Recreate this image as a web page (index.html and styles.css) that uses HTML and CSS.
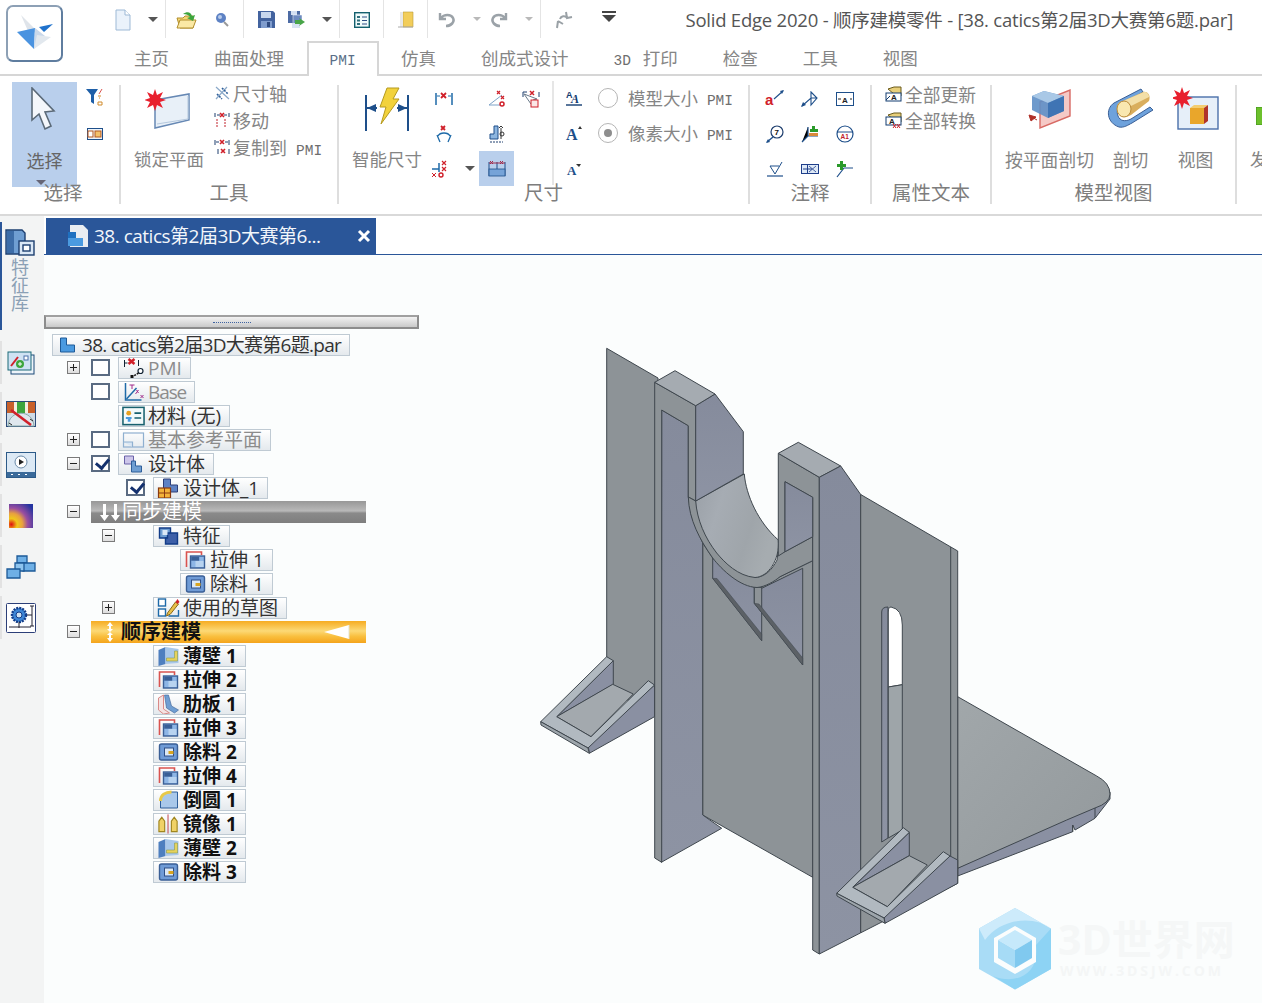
FILE: index.html
```html
<!DOCTYPE html>
<html lang="zh">
<head>
<meta charset="utf-8">
<title>Solid Edge 2020</title>
<link rel="stylesheet" href="styles.css">
</head>
<body>
<svg class="defs" aria-hidden="true">
  <symbol id="extrude" viewBox="0 0 22 20"><path d="M2 17V2h15v3" fill="none" stroke="#d9534f" stroke-width="1.600"/><rect x="6" y="6" width="14" height="12" fill="#8eb6e6" stroke="#3a5f96" stroke-width="1.400"/><rect x="6.700" y="6.700" width="8" height="4" fill="#3a5f96"/><rect x="11" y="11" width="8" height="6" fill="#b8d3f0"/></symbol>
  <symbol id="cut" viewBox="0 0 22 20"><rect x="2" y="2" width="18" height="16" rx="2" fill="#6f9bd6" stroke="#3a5f96" stroke-width="1.400"/><rect x="7" y="6" width="9" height="8" fill="#dbe8f6" stroke="#2f4f86"/><rect x="11" y="9" width="5" height="3" fill="#d9a521"/></symbol>
  <symbol id="thin" viewBox="0 0 22 20"><path d="M1 4l7-3v17l-7 2z" fill="#4e7fbf"/><path d="M8 1l13 2v14L8 18z" fill="#a9c8ea"/><path d="M9 12h8V5h3v10H9z" fill="#e6d25c" stroke="#8a9b52" stroke-width=".6"/></symbol>
  <symbol id="drop" viewBox="0 0 10 6"><path d="M0 0h10L5 5z"/></symbol>
</svg>

<div class="app">
  <header class="head">
    <div class="logo-cell">
      <div class="logo">
        <svg width="52" height="52" viewBox="2 3 52 52">
          <path d="M14 10l18 18-11-2z" fill="#dfe4ea"/>
          <path d="M10 27l17 17 1-21z" fill="#4a93e0"/>
          <path d="M28 23l-1 21 11-13z" fill="#c9d8ea"/>
          <path d="M32 22l14-3-9 8z" fill="#1f72cc"/>
          <path d="M30 30l14 2-17 12z" fill="#e2e8ee"/>
        </svg>
      </div>
    </div>
    <div class="head-main">
      <div class="qat">
        <span class="q ml47"><svg width="18" height="22" viewBox="0 0 18 22"><path d="M2 1h9l5 5v15H2z" fill="#eaf2fb" stroke="#9db9d6"/><path d="M11 1v5h5" fill="#fff" stroke="#9db9d6"/></svg></span>
        <span class="q dropq ml10"><svg class="dr" width="10" height="6"><use href="#drop"/></svg></span>
        <span class="qsep ml2"></span>
        <span class="q ml11"><svg width="22" height="20" viewBox="0 0 22 20"><path d="M1 8h6l2-2h8v12H4z" fill="#f4d774" stroke="#b28e2c"/><path d="M1 18l3-8h16l-3 8z" fill="#fbe9a5" stroke="#b28e2c"/><path d="M7 4c4-3 8-2 9 2l3-1-2 6-6-3 3-1c-1-2-4-3-7-3z" fill="#3da53d"/></svg></span>
        <span class="q ml15"><svg width="14" height="16" viewBox="0 0 14 16"><circle cx="6" cy="6" r="5" fill="#5e82c4"/><circle cx="5" cy="5" r="2" fill="#b8cbea"/><path d="M9 10l4 4" stroke="#999" stroke-width="2"/></svg></span>
        <span class="qsep ml11"></span>
        <span class="q ml12"><svg width="17" height="17" viewBox="0 0 17 17"><path d="M0 0h15l2 2v15H0z" fill="#43639f"/><rect x="3" y="1" width="10" height="6" fill="#c8d7ee"/><rect x="3" y="10" width="11" height="7" fill="#7f9ccd"/><rect x="9" y="11" width="3" height="5" fill="#2f4a80"/></svg></span>
        <span class="q ml11"><svg width="18" height="18" viewBox="0 0 18 18"><path d="M0 0h12v12H0z" fill="#4d6ba4"/><rect x="3" y="0" width="6" height="4" fill="#d5e0f2"/><path d="M5 4h9v9H5z" fill="#6d8ac0" stroke="#fff" stroke-width=".5"/><path d="M4 12h8v5H4z" fill="#d7e3f3"/><path d="M7 9h5l-1-2 6 4-6 4 1-2H7z" fill="#48a548"/></svg></span>
        <span class="q dropq ml10"><svg class="dr" width="10" height="6"><use href="#drop"/></svg></span>
        <span class="qsep ml2"></span>
        <span class="q ml12"><svg width="16" height="16" viewBox="0 0 16 16"><rect x=".7" y=".7" width="14.600" height="14.600" fill="#f1fbfb" stroke="#13606e" stroke-width="1.400"/><path d="M3 4h3v2H3zM3 7.500h3v2H3zM3 11h3v2H3z" fill="#2f6f7c"/><path d="M8 5h5M8 8.500h5M8 12h5" stroke="#2f4f86" stroke-width="1.200"/></svg></span>
        <span class="qsep ml11"></span>
        <span class="q ml12"><svg width="16" height="18" viewBox="0 0 16 18"><path d="M5 1h10v15H5z" fill="#f2cd5a" stroke="#b99a3a" stroke-width=".6"/><path d="M5 1H2v15h3z" fill="#e8e8e8"/><path d="M0 16h15" stroke="#aaa"/></svg></span>
        <span class="qsep ml11"></span>
        <span class="q ml9"><svg width="18" height="16" viewBox="0 0 18 16"><path d="M2 1v6h6" fill="none" stroke="#9ba2a8" stroke-width="2.400"/><path d="M3 6c3-4 10-4 12 0s-2 8-7 8" fill="none" stroke="#9ba2a8" stroke-width="2.600"/></svg></span>
        <span class="q dropq ml10"><svg class="dr pale" width="8" height="5"><use href="#drop"/></svg></span>
        <span class="q ml2"><svg width="18" height="16" viewBox="0 0 18 16"><path d="M16 1v6h-6" fill="none" stroke="#9ba2a8" stroke-width="2.400"/><path d="M15 6C12 2 5 2 3 6s2 8 7 8" fill="none" stroke="#9ba2a8" stroke-width="2.600"/></svg></span>
        <span class="q dropq ml10"><svg class="dr pale" width="8" height="5"><use href="#drop"/></svg></span>
        <span class="qsep ml1"></span>
        <span class="q ml13"><svg width="18" height="18" viewBox="0 0 18 18"><path d="M11 1l1 6 5-1M12 7c-2-3-6-2-7 1" fill="none" stroke="#9aa1a6" stroke-width="2"/><path d="M2 17l1-7M3 10l5 3" fill="none" stroke="#9aa1a6" stroke-width="2"/></svg></span>
        <span class="q ml25 custom"><svg width="14" height="12" viewBox="0 0 14 12"><path d="M0 0h14v2H0z" fill="#444"/><path d="M0 4h14l-7 7z" fill="#444"/></svg></span>
        <span class="title">Solid Edge 2020 - 顺序建模零件 - [38. catics第2届3D大赛第6题.par]</span>
      </div>
      <nav class="tabs">
        <span class="rtab">主页</span>
        <span class="rtab">曲面处理</span>
        <span class="rtab active"><span class="lat">PMI</span></span>
        <span class="rtab">仿真</span>
        <span class="rtab">创成式设计</span>
        <span class="rtab"><span class="lat lat3d">3D </span>打印</span>
        <span class="rtab">检查</span>
        <span class="rtab">工具</span>
        <span class="rtab">视图</span>
      </nav>
    </div>
  </header>

  <section class="ribbon">
    <div class="grp g-select">
      <div class="gbody">
        <div class="bigsel">
          <svg class="bigicon" width="30" height="44" viewBox="0 0 30 44"><path d="M5 1v32l7-6 6 15 6-3-6-14 9-1z" fill="#f4f7fb" stroke="#5b6a78" stroke-width="1.600"/></svg>
          <span class="bigtxt">选择</span>
          <svg class="selcaret" width="10" height="6"><use href="#drop"/></svg>
        </div>
        <div class="colsmall">
          <svg width="18" height="18" viewBox="0 0 18 18"><path d="M0 1h12L8 7v9L5 14V7z" fill="#1e5fa8"/><path d="M16 1l-3 5" stroke="#d9534f"/><path d="M12 8h3M13 10h1M12 14h4v3h-4z" stroke="#d08a2a" fill="none"/></svg>
          <svg width="16" height="12" viewBox="0 0 16 12"><rect x=".5" y=".5" width="15" height="11" fill="#eef4fa" stroke="#1e4f8a"/><rect x="8" y="3" width="6" height="6" fill="#f3c16b" stroke="#b5561d"/><rect x="1" y="3" width="5" height="6" fill="#fff" stroke="#b5561d"/></svg>
        </div>
      </div>
      <div class="glabel lab-select">选择</div>
    </div>
    <i class="gsep"></i>
    <div class="grp g-tools">
      <div class="gbody">
        <div class="big w70 ml13">
          <svg class="bigicon" width="48" height="42" viewBox="0 0 48 42"><path d="M10 12l34-6v26L10 40z" fill="#e8f0f8" stroke="#6688b4" stroke-width="1.500"/><path d="M12 36l31-5V8" fill="none" stroke="#b5c8dd"/><path d="M10 1l2 6 6-3-3 6 6 2-6 2 3 6-6-3-2 6-2-6-6 3 3-6-6-2 6-2-3-6 6 3z" fill="#e8202e"/></svg>
          <span class="bigtxt">锁定平面</span>
        </div>
        <div class="smalllist ml10">
          <div class="sl"><svg width="16" height="16" viewBox="0 0 16 16"><path d="M2 2l13 12M13 2L2 14" stroke="#8ba9c9" stroke-width="1.200"/><path d="M8 3l6 6M3 9l5 5" stroke="#2f5f9a" stroke-width="1.600" stroke-dasharray="2 1"/></svg><span>尺寸轴</span></div>
          <div class="sl"><svg width="16" height="16" viewBox="0 0 16 16"><path d="M1 1v4M15 1v4M3 3h3M10 3h3" stroke="#1e3e6e"/><path d="M6 1l4 4M10 1L6 5" stroke="#d0202a" stroke-width="1.600"/><path d="M3 7v8M11 7v8" stroke="#c0202a" stroke-dasharray="2 1"/></svg><span>移动</span></div>
          <div class="sl"><svg width="16" height="16" viewBox="0 0 16 16"><path d="M1 1v5M15 1v5M2 3h3M11 3h3M4 10v5M15 10v5" stroke="#1e3e6e"/><path d="M6 1l4 4M10 1L6 5M7 10l4 4M11 10l-4 4" stroke="#d0202a" stroke-width="1.600"/></svg><span>复制到 <span class="lat">PMI</span></span></div>
        </div>
      </div>
      <div class="glabel">工具</div>
    </div>
    <i class="gsep"></i>
    <div class="grp g-dim">
      <div class="gbody">
        <div class="big w70 ml13">
          <svg class="bigicon" width="48" height="44" viewBox="0 0 48 44"><path d="M3 8v38M45 8v38" stroke="#1e4f8a" stroke-width="2"/><path d="M4 21l9-4v8zM44 21l-9-4v8z" fill="#1e4f8a"/><path d="M4 21h10M34 21h10" stroke="#1e4f8a" stroke-width="2"/><path d="M24 1h12l-6 11h6L18 37l5-17h-6z" fill="#f2d23c" stroke="#b59a1f"/></svg>
          <span class="bigtxt">智能尺寸</span>
        </div>
        <div class="icogrid ml5">
          <span><svg width="18" height="16" viewBox="0 0 18 16"><path d="M1 2v12M17 2v12" stroke="#1e6aa8" stroke-width="1.500"/><path d="M2 5h3M13 5h3" stroke="#1e6aa8"/><path d="M6 2l5 5M11 2L6 7" stroke="#d0202a" stroke-width="1.800"/></svg></span>
          <span></span>
          <span><svg width="18" height="18" viewBox="0 0 18 18"><path d="M1 15L14 5M1 15h11" stroke="#7fa4c9"/><path d="M9 1l3 3M12 1L9 4M13 6l3 3M16 6l-3 3" stroke="#d0202a" stroke-width="1.200"/><circle cx="14" cy="14" r="2" fill="none" stroke="#d0202a" stroke-width="1.500"/></svg></span>
          <span><svg width="18" height="18" viewBox="0 0 18 18"><path d="M1 2h4M1 2v5M17 2v5" stroke="#1e3e6e"/><path d="M8 1l4 4M12 1L8 5" stroke="#d0202a" stroke-width="1.500"/><path d="M2 4l7 10 2-4 4-1z" fill="#fff" stroke="#6a7a8a"/><rect x="9" y="10" width="7" height="7" fill="#fbe7e7" stroke="#d0202a"/></svg></span>
          <span><svg width="18" height="18" viewBox="0 0 18 18"><path d="M6 1l4 4M10 1L6 5" stroke="#d0202a" stroke-width="1.800"/><path d="M3 11c2-4 10-4 12 0" fill="none" stroke="#1e6aa8" stroke-width="1.300"/><path d="M2 10l3 7M16 10l-3 7" stroke="#1e6aa8" stroke-width="1.300"/></svg></span>
          <span></span>
          <span><svg width="16" height="18" viewBox="0 0 16 18"><path d="M1 9h4V1h4v13H1z" fill="#8db6e0" stroke="#1e4f8a"/><path d="M12 3v11" stroke="#333"/><path d="M10 3l2-2 2 2" fill="none" stroke="#333"/><circle cx="13" cy="9" r="2" fill="none" stroke="#333"/><path d="M1 17h13" stroke="#1e3e6e" stroke-dasharray="2 1"/></svg></span>
          <span></span>
          <span class="shl"><svg width="18" height="18" viewBox="0 0 18 18"><path d="M1 9h7M8 3v9" stroke="#1e6aa8" stroke-width="1.500"/><path d="M11 1l4 4M15 1l-4 4M11 7l4 4M15 7l-4 4" stroke="#d0202a" stroke-width="1.200"/><path d="M1 13l4 4M5 13l-4 4" stroke="#d0202a"/><circle cx="10" cy="15" r="2" fill="none" stroke="#d0202a" stroke-width="1.400"/></svg></span>
          <span><svg class="dr" width="10" height="6"><use href="#drop"/></svg></span>
          <span class="sel"><svg width="18" height="18" viewBox="0 0 18 18"><path d="M1 2v14M9 2v14M17 2v14" stroke="#1e4f8a"/><rect x="1" y="9" width="16" height="7" fill="#76a3d8" stroke="#1e4f8a" stroke-width=".8"/><path d="M2 1l3 3M5 1L2 4M12 1l3 3M15 1l-3 3" stroke="#a02a4a"/><path d="M1 3h16" stroke="#a02a4a"/></svg></span>
          <span></span>
        </div>
        <i class="innersep"></i>
        <div class="icocol">
          <span><svg width="18" height="18" viewBox="0 0 18 18"><text class="ta" x="1" y="8">A</text><text class="tb" x="6" y="13">A</text><path d="M1 15h16" stroke="#123c70" stroke-width="1.400"/></svg></span>
          <span><svg width="20" height="20" viewBox="0 0 20 20"><text class="tc" x="2" y="16">A</text><path d="M14 5l2-3 2 3z" fill="#333"/></svg></span>
          <span><svg width="18" height="18" viewBox="0 0 18 18"><text class="td" x="2" y="15">A</text><path d="M11 4h5l-2 3z" fill="#333"/></svg></span>
        </div>
        <div class="radios">
          <div class="radio"><i class="rd"></i><span>模型大小 <span class="lat">PMI</span></span></div>
          <div class="radio"><i class="rd on"></i><span>像素大小 <span class="lat">PMI</span></span></div>
        </div>
      </div>
      <div class="glabel">尺寸</div>
    </div>
    <i class="gsep"></i>
    <div class="grp g-note">
      <div class="gbody">
        <div class="icogrid3 ml7">
          <span><svg width="20" height="20" viewBox="0 0 20 20"><text class="tr" x="0" y="16">a</text><path d="M9 10l9-8" stroke="#1e4f8a" stroke-width="1.200"/><path d="M19 1l-4 1 2 3z" fill="#1e4f8a"/></svg></span>
          <span><svg width="18" height="16" viewBox="0 0 18 16"><path d="M1 15L10 7h6M10 1l6 6-6 7z" fill="none" stroke="#1e4f8a" stroke-width="1.100"/><path d="M0 16l5-2-3-3z" fill="#1e4f8a"/></svg></span>
          <span><svg width="18" height="14" viewBox="0 0 18 14"><rect x=".5" y=".5" width="17" height="13" fill="#fff" stroke="#1e4f8a"/><text class="tk" x="6" y="10.500">A</text><path d="M2 7h3M14 7h2" stroke="#222"/></svg></span>
          <span><svg width="18" height="18" viewBox="0 0 18 18"><circle cx="11" cy="7" r="6" fill="#fff" stroke="#1e3e6e" stroke-width="1.200"/><text class="tn" x="8.500" y="10">7</text><path d="M7 12l-6 5" stroke="#1e4f8a" stroke-width="1.400"/><path d="M0 18l4-1-2-3z" fill="#1e4f8a"/></svg></span>
          <span><svg width="18" height="18" viewBox="0 0 18 18"><path d="M1 17l6-6V2M7 11h10" stroke="#1e4f8a" stroke-width="1.200"/><path d="M11 1h3v3h3v3H9V4h2z" fill="#2a9a2a"/><path d="M8 8h9v3H8z" fill="#d98a3a"/></svg></span>
          <span><svg width="18" height="18" viewBox="0 0 18 18"><circle cx="9" cy="9" r="8" fill="#fff" stroke="#1e4f8a" stroke-width="1.200"/><path d="M1 7h16" stroke="#1e4f8a"/><text class="tm" x="4.500" y="14">A1</text></svg></span>
          <span><svg width="16" height="16" viewBox="0 0 16 16"><path d="M0 15h16" stroke="#1e4f8a" stroke-width="1.200"/><path d="M3 5l5 8 7-12" fill="none" stroke="#1e4f8a"/><path d="M3 5h9" stroke="#1e4f8a"/></svg></span>
          <span><svg width="18" height="10" viewBox="0 0 18 10"><rect x=".5" y=".5" width="17" height="9" fill="#dfeaf7" stroke="#1e3e8a"/><path d="M6.500 1v8M2 5h9" stroke="#1e3e8a"/><path d="M8 2l7 6M15 2L8 8" stroke="#1e3e8a" stroke-width=".8"/></svg></span>
          <span><svg width="18" height="18" viewBox="0 0 18 18"><path d="M1 17l7-9h9" fill="none" stroke="#1e4f8a" stroke-width="1.200"/><path d="M4 1h3v3h3v3H7v3H4V7H1V4h3z" fill="#2a9a2a"/></svg></span>
        </div>
      </div>
      <div class="glabel">注释</div>
    </div>
    <i class="gsep"></i>
    <div class="grp g-attr">
      <div class="gbody">
        <div class="attrlist">
          <div class="sl"><svg width="17" height="16" viewBox="0 0 17 16"><path d="M3 3l6-2h7v9L9 8z" fill="#e8cf7a" stroke="#6a5a1a"/><rect x="1" y="7" width="15" height="8" fill="#fff" stroke="#123c70"/><text class="tk" x="6" y="14">A</text><path d="M1 14l4-4" stroke="#123c70"/></svg><span>全部更新</span></div>
          <div class="sl"><svg width="17" height="17" viewBox="0 0 17 17"><path d="M3 3l6-2h7v9L9 8z" fill="#e8cf7a" stroke="#6a5a1a"/><rect x="1" y="5" width="15" height="8" fill="#fff" stroke="#123c70"/><text class="tk" x="4" y="12">A</text><path d="M8 12l3 4M11 12l-3 4M12 12l3 4M15 12l-3 4" stroke="#d0202a"/></svg><span>全部转换</span></div>
        </div>
      </div>
      <div class="glabel">属性文本</div>
    </div>
    <i class="gsep"></i>
    <div class="grp g-model">
      <div class="gbody">
        <div class="big w89 ml13">
          <svg class="bigicon" width="48" height="42" viewBox="0 0 48 42"><path d="M14 14L44 2v26L14 40z" fill="#f5c9c6" stroke="#d86a64" stroke-width="1.400"/><path d="M6 8l12-5 20 5v15l-16 7-16-8z" fill="#5e8fc6" opacity=".9"/><path d="M6 8l12-5 20 5-16 7z" fill="#a9c8e6"/><path d="M22 15l16-7v15l-16 7z" fill="#3f74b4"/><path d="M4 28l7 4M3 27l2 6 5-4z" stroke="#b03028" fill="#b03028"/></svg>
          <span class="bigtxt">按平面剖切</span>
        </div>
        <div class="big w35 ml19">
          <svg class="bigicon wide" width="48" height="42" viewBox="0 0 48 42"><path d="M34 1L7 15c-9 6-7 20 5 24 5 1 9-2 13-4l21-13-3-3-19 12c-6 3-11 2-13-3s0-9 6-12L36 4z" fill="#6ea2dc" stroke="#3a5f96"/><path d="M36 4c5-1 8 4 6 9L24 27c-7 4-13 1-14-5s2-8 6-9z" fill="#d9ae5e"/><path d="M16 13l21-9c3 0 5 2 5 5L20 20z" fill="#f3dfa8"/><ellipse cx="17" cy="21" rx="7" ry="8" fill="#f9e8b0" stroke="#b98a3a"/></svg>
          <span class="bigtxt">剖切</span>
        </div>
        <div class="big w35 ml30">
          <svg class="bigicon wide" width="46" height="44" viewBox="0 0 46 44"><rect x="5" y="10" width="40" height="32" fill="#e6eff9" stroke="#4a70aa" stroke-width="1.400"/><path d="M17 21h14v16H17z" fill="#e9a62b"/><path d="M17 21l4-3h14l-4 3z" fill="#f3cd71"/><path d="M31 21l4-3v16l-4 3z" fill="#b0332a"/><path d="M9 0l2 6 6-3-3 6 6 2-6 2 3 6-6-3-2 6-2-6-6 3 3-6-6-2 6-2-3-6 6 3z" fill="#e8202e"/></svg>
          <span class="bigtxt">视图</span>
        </div>
      </div>
      <div class="glabel">模型视图</div>
    </div>
    <i class="gsep"></i>
    <div class="grp g-last">
      <div class="gbody">
        <div class="big w35 ml13">
          <svg class="bigicon lasticon" width="24" height="18" viewBox="0 0 24 18"><rect x="0" y="0" width="24" height="18" fill="#6cc02c" stroke="#3f8f1a"/></svg>
          <span class="bigtxt">发布</span>
        </div>
      </div>
    </div>
  </section>

  <div class="main">
    <aside class="strip">
      <div class="vtab">
        <svg width="30" height="28" viewBox="0 0 30 28"><path d="M1 2h16l3 3v21H1z" fill="#6f9ed2" stroke="#1d3f70" stroke-width="1.400"/><rect x="2" y="3" width="7" height="22" fill="#3d6da8"/><rect x="14" y="13" width="15" height="14" fill="#dbe8f6" stroke="#1d3f70" stroke-width="1.400"/><rect x="18" y="17" width="7" height="6" fill="#fff" stroke="#1d3f70" stroke-width="1.400"/></svg>
        <span class="vtxt">特征库</span>
      </div>
      <div class="sitem"><svg width="28" height="24" viewBox="0 0 28 24"><rect x="4" y="4" width="23" height="19" fill="#eef4fa" stroke="#1d4a78"/><rect x="1" y="1" width="23" height="18" fill="#cfe2f3" stroke="#1d6a78"/><path d="M4 15L11 6" stroke="#d0202a" stroke-width="2"/><circle cx="13" cy="13" r="4" fill="#3da53d"/><path d="M11 13h4M13 11v4" stroke="#fff"/><rect x="17" y="5" width="4" height="4" fill="#fff" stroke="#4a70aa"/></svg></div>
      <div class="sitem"><svg width="30" height="26" viewBox="0 0 30 26"><rect x=".5" y=".5" width="29" height="25" fill="#cfdbe6" stroke="#2c4a78"/><rect x="1" y="1" width="7" height="11" fill="#c8602a"/><rect x="8" y="1" width="3" height="11" fill="#f4eee0"/><rect x="11" y="1" width="8" height="11" fill="#3da53d"/><rect x="19" y="1" width="3" height="11" fill="#f4eee0"/><rect x="22" y="1" width="7" height="11" fill="#c8602a"/><path d="M2 25c1-17 25-17 26 0z" fill="#dfe7ee" stroke="#8aa"/><path d="M5 9l20 15" stroke="#d0202a" stroke-width="2.600"/><path d="M3 22l3 2M24 18l3 2" stroke="#222"/></svg></div>
      <div class="sitem"><svg width="30" height="26" viewBox="0 0 30 26"><rect x=".5" y=".5" width="29" height="25" fill="#dce9f5" stroke="#2c5a88"/><circle cx="15" cy="10" r="6" fill="#fff" stroke="#6a8aa8"/><path d="M13 7l5 3-5 3z" fill="#222"/><rect x="1" y="20" width="28" height="5" fill="#3a6a9a"/><path d="M5 22.500h20" stroke="#fff" stroke-dasharray="2 5"/></svg></div>
      <div class="sitem"><svg width="24" height="24" viewBox="0 0 24 24"><defs><radialGradient id="heat" cx=".1" cy=".85" r="1.100"><stop offset="0" stop-color="#e01010"/><stop offset=".22" stop-color="#f0c81a"/><stop offset=".42" stop-color="#e8a040"/><stop offset=".62" stop-color="#9a4ea0"/><stop offset="1" stop-color="#2433a0"/></radialGradient></defs><rect width="24" height="24" fill="url(#heat)"/></svg></div>
      <div class="sitem"><svg width="30" height="24" viewBox="0 0 30 24"><path d="M11 1h10v7h-10z" fill="#6fb0e6" stroke="#1d5a98" stroke-width="1.300"/><path d="M17 8h12v8H17z" fill="#6fb0e6" stroke="#1d5a98" stroke-width="1.300"/><path d="M9 8h9v8H9z" fill="#8ec4ee" stroke="#1d5a98" stroke-width="1.300"/><path d="M1 14h13v9H1z" fill="#6fb0e6" stroke="#1d5a98" stroke-width="1.300"/></svg></div>
      <div class="sitem"><svg width="30" height="30" viewBox="0 0 30 30"><rect x=".5" y=".5" width="29" height="29" rx="1" fill="#fff" stroke="#2c3f78"/><circle cx="13" cy="12" r="7" fill="#3d86d6" stroke="#123c88" stroke-width="2.400" stroke-dasharray="2 1"/><circle cx="13" cy="12" r="3" fill="#cfe2f3" stroke="#123c88"/><path d="M24 3h4M26 3v20M24 23h4M21 12h5M3 24h22M13 19v6" stroke="#223"/></svg></div>
    </aside>

    <div class="work">
      <div class="doctabs">
        <div class="doctab">
          <svg width="22" height="24" viewBox="0 0 22 24"><path d="M3 1h13l5 5v17H3z" fill="#e9edf2"/><path d="M1 8h8v6h7v8H1z" fill="#4a9ae0"/><path d="M1 8h8v6H1z" fill="#1e70c0"/></svg>
          <span class="doctxt">38. catics第2届3D大赛第6...</span>
          <svg class="docx" width="14" height="14" viewBox="0 0 14 14" role="img" aria-label="关闭"><path d="M2 2l10 10M12 2L2 12" stroke="#fff" stroke-width="3"/></svg>
        </div>
      </div>
      <div class="stage">
        <div class="pane">
          <div class="splitter"><i></i></div>
          <div class="tree">
            <div class="root node">
              <svg class="ti" width="18" height="18" viewBox="0 0 18 18"><path d="M2 2h6v7h8v7H2z" fill="#4a9ae0" stroke="#1d5a98"/></svg><span>38. catics第2届3D大赛第6题.par</span>
            </div>
            <div class="row">
              <i class="exp c1"></i><i class="chk c2"></i>
              <div class="node c4 dim"><svg class="ti" width="22" height="20" viewBox="0 0 22 20"><path d="M2 2v7M2 5h3" stroke="#123"/><path d="M6 1l6 5M12 1L6 6" stroke="#d0202a" stroke-width="2.500"/><path d="M16 2v6" stroke="#123"/><circle cx="18" cy="13" r="2.500" fill="#fff" stroke="#123" stroke-width="1.200"/><path d="M16 15l-5 3" stroke="#111" stroke-dasharray="2 1" stroke-width="1.500"/><rect x="8" y="17" width="3" height="3" fill="#111"/></svg><span>PMI</span></div>
            </div>
            <div class="row">
              <i class="chk c2"></i>
              <div class="node c4 dim tight"><svg class="ti" width="22" height="20" viewBox="0 0 22 20"><path d="M3 1v17h16" fill="none" stroke="#1e6aa8" stroke-width="1.500"/><path d="M4 17L14 6" stroke="#1e6aa8" stroke-width="1.500"/><path d="M7 3h5M9.500 3v4" stroke="#a02a8a"/><path d="M14 8l2 3M16 8l-3 4" stroke="#a02a8a"/><path d="M18 13l3 3M21 13l-3 3" stroke="#a02a8a"/></svg><span>Base</span></div>
            </div>
            <div class="row">
              <div class="node c4"><svg class="ti" width="24" height="20" viewBox="0 0 24 20"><rect x="1" y="1" width="22" height="18" fill="#f2f9fa" stroke="#16606e" stroke-width="1.600"/><circle cx="7" cy="7" r="2.500" fill="#e8a020"/><path d="M4 11h6v2H4zM6 13h3v3H6z" fill="#4a9ae0"/><path d="M13 7h7M13 12h7" stroke="#16606e" stroke-width="1.600"/></svg><span>材料 (无)</span></div>
            </div>
            <div class="row">
              <i class="exp c1"></i><i class="chk c2"></i>
              <div class="node c4 dim"><svg class="ti" width="22" height="18" viewBox="0 0 22 18"><rect x="1" y="2" width="20" height="14" fill="none" stroke="#8fb0d0" stroke-width="1.200"/><path d="M1 11h9v5" fill="#d8e6f4" stroke="#8fb0d0" stroke-width="1.200"/></svg><span>基本参考平面</span></div>
            </div>
            <div class="row">
              <i class="exp minus c1"></i><i class="chk on c2"></i>
              <div class="node c4"><svg class="ti" width="20" height="18" viewBox="0 0 20 18"><path d="M1 1h9v8H1z" fill="#cdc6ea" stroke="#6a62a8"/><path d="M8 6h4v5h6v6H8z" fill="#6f9ed2" stroke="#2f5f9a"/></svg><span>设计体</span></div>
            </div>
            <div class="row">
              <i class="chk on c5"></i>
              <div class="node c6"><svg class="ti" width="22" height="20" viewBox="0 0 22 20"><path d="M6 1h7v6h7v7H6z" fill="#5e82c4" stroke="#2c3f78"/><rect x="1" y="10" width="12" height="10" fill="#f2b33a" stroke="#8a3a10" stroke-width="1.200"/><path d="M7 10v10M1 15h12" stroke="#8a3a10"/></svg><span>设计体_1</span></div>
            </div>
            <div class="row">
              <i class="exp minus c1"></i>
              <div class="band gray"><svg width="20" height="18" viewBox="0 0 20 18"><path d="M3 1h3v11h3l-4.500 6L0 12h3zM14 1h3v11h3l-4.500 6L11 12h3z" fill="#fff"/></svg><span>同步建模</span></div>
            </div>
            <div class="row">
              <i class="exp minus c3"></i>
              <div class="node c6"><svg class="ti" width="20" height="18" viewBox="0 0 20 18"><path d="M1 1h11v10H1z" fill="#6f9ed2" stroke="#123c88" stroke-width="1.400"/><path d="M9 6h10v11H7v-6h2z" fill="#3d5fa8" stroke="#123c88" stroke-width="1.400"/><rect x="4" y="3" width="5" height="5" fill="#dbe8f6"/></svg><span>特征</span></div>
            </div>
            <div class="row">
              <div class="node c7"><svg class="ti" width="22" height="20"><use href="#extrude"/></svg><span>拉伸 1</span></div>
            </div>
            <div class="row">
              <div class="node c7"><svg class="ti" width="22" height="20"><use href="#cut"/></svg><span>除料 1</span></div>
            </div>
            <div class="row">
              <i class="exp c3"></i>
              <div class="node c6"><svg class="ti" width="22" height="20" viewBox="0 0 22 20"><rect x="1" y="1" width="7" height="7" fill="#fff" stroke="#1e6aa8" stroke-width="1.400"/><rect x="1" y="11" width="7" height="7" fill="#fff" stroke="#1e6aa8" stroke-width="1.400"/><path d="M11 18h10v-6" fill="none" stroke="#1e6aa8" stroke-width="1.400"/><path d="M10 15l8-11 3 2-8 10-4 2z" fill="#e8c04a" stroke="#8a6a1a"/><path d="M18 4l2-3 2 3-2 2z" fill="#d0202a"/></svg><span>使用的草图</span></div>
            </div>
            <div class="row">
              <i class="exp minus c1"></i>
              <div class="band orange"><svg width="20" height="20" viewBox="0 0 20 20"><path d="M10 0l3 4h-2v3h2l-3 3-3-3h2V4H7zM10 10l3 3h-2v3h2l-3 4-3-4h2v-3H7z" fill="#fff"/></svg><span>顺序建模</span><svg class="band-arrow" width="26" height="16" viewBox="0 0 26 16"><path d="M0 8l25-7v14z" fill="#fff"/><path d="M25 1v14" stroke="#e2e2d0"/></svg></div>
            </div>
            <div class="row"><div class="node c6 b"><svg class="ti" width="22" height="20"><use href="#thin"/></svg><span>薄壁 1</span></div></div>
            <div class="row"><div class="node c6 b"><svg class="ti" width="22" height="20"><use href="#extrude"/></svg><span>拉伸 2</span></div></div>
            <div class="row"><div class="node c6 b"><svg class="ti" width="22" height="20" viewBox="0 0 22 20"><path d="M1 4l5-3v14l6 4-6 1-5-4z" fill="#f4e3e3" stroke="#d98a88"/><path d="M7 1h4l3 11 7 4-4 3-8-5z" fill="#6f9ed2" stroke="#3a5f96" stroke-width=".6"/></svg><span>肋板 1</span></div></div>
            <div class="row"><div class="node c6 b"><svg class="ti" width="22" height="20"><use href="#extrude"/></svg><span>拉伸 3</span></div></div>
            <div class="row"><div class="node c6 b"><svg class="ti" width="22" height="20"><use href="#cut"/></svg><span>除料 2</span></div></div>
            <div class="row"><div class="node c6 b"><svg class="ti" width="22" height="20"><use href="#extrude"/></svg><span>拉伸 4</span></div></div>
            <div class="row"><div class="node c6 b"><svg class="ti" width="22" height="20" viewBox="0 0 22 20"><path d="M3 18V10C3 5 8 2 13 2h7v16z" fill="#a9c8ea" stroke="#2f5f9a"/><path d="M3 11C3 5 8 2 14 2" fill="none" stroke="#e8c94a" stroke-width="3"/></svg><span>倒圆 1</span></div></div>
            <div class="row"><div class="node c6 b"><svg class="ti" width="24" height="20" viewBox="0 0 24 20"><path d="M2 7l3-4 3 4v11H2zM15 7l3-4 3 4v11h-6z" fill="#f0d266" stroke="#a0861f" stroke-width="1.200"/><path d="M11.500 0v20" stroke="#c0404a"/></svg><span>镜像 1</span></div></div>
            <div class="row"><div class="node c6 b"><svg class="ti" width="22" height="20"><use href="#thin"/></svg><span>薄壁 2</span></div></div>
            <div class="row"><div class="node c6 b"><svg class="ti" width="22" height="20"><use href="#cut"/></svg><span>除料 3</span></div></div>
          </div>
        </div>

        <div class="canvas">
          <svg class="model" width="843" height="748" viewBox="419 255 843 748">
            <defs>
              <linearGradient id="cyl" x1="0" y1="0" x2="1" y2=".4"><stop offset="0" stop-color="#999fa6"/><stop offset=".35" stop-color="#a6acb3"/><stop offset=".75" stop-color="#9fa5aa"/><stop offset="1" stop-color="#a6acb0"/></linearGradient>
              <linearGradient id="plate" x1="0" y1="0" x2="1" y2="1"><stop offset="0" stop-color="#a1a7aa"/><stop offset="1" stop-color="#93999c"/></linearGradient>
              <linearGradient id="blue" x1="0" y1="0" x2="0" y2="1"><stop offset="0" stop-color="#858b9c"/><stop offset="1" stop-color="#8d93a3"/></linearGradient>
            </defs>
            <!-- back plate -->
            <path class="grey" d="M606.700 348.300L658 378V700H606.700Z"/>
            <!-- left foot -->
            <path class="wall" d="M613.300 660.700V684.300L556.700 716.700Z"/>
            <path class="floor" d="M556.700 716.700L612.700 684.300L633.300 694L591 736.700Z"/>
            <path class="wall" d="M654.500 685V716.700L589.300 753.300L588 745Z"/>
            <path class="rim" d="M540.700 721.700L606.700 656.700L613.300 660.700L556.700 716.700L591 736.700L648.300 680.700L654.500 685L588 748Z"/>
            <path class="lip" d="M540.700 721.700L588 748L589.300 753.300L541 725Z"/>
            <!-- base plate -->
            <path class="under" d="M957.700 868V876L1072.700 831.700V825L1075 830L1095 818.300L1110 799V792Z"/>
            <path class="plate" d="M957.700 696.700L1096.700 776Q1110 783 1110 794Q1110 803 1095 808L1066.700 820L957.700 868.300Z"/>
            <path class="line" d="M1095 808V818M1072.700 825V832"/>
            <!-- central face -->
            <path class="grey" d="M702.700 543L712.700 558L730 575L754 587.300H760.700L780 576.700L812.700 560.700V877.300L702.700 815Z"/>
            <!-- notches -->
            <path class="blue" d="M712.700 558V578.300L761.700 640.700V587.300H754L730 575Z"/>
            <path class="blue" d="M761.700 588.300L802.700 568.300V665L754.300 603.300V587.300Z"/>
            <path class="grey" d="M754.300 587.300V603.300L761.700 612V587.300Z"/>
            <path class="dark" d="M712.700 578.300L717 578.500L761.700 634V640.700Z"/>
            <path class="dark" d="M754.300 603.300L759 604L802.700 658V665Z"/>
            <!-- left column panel -->
            <path class="blue" d="M661.700 410L688.300 425.700V497L691.700 516.700L702.700 543V815L721.700 828.300L661.300 862.300Z"/>
            <path class="grey" d="M654.700 382.300L695.700 405.700V501L688.300 497V425.700L661.700 410V862.300L654.700 858Z"/>
            <!-- cylinder cut and rim -->
            <path class="grey" d="M688.300 497C689 520 700 540 712.700 558C722 570 740 587 757 587.500C765 587 775 581 780 576.700L812.700 560.700V536.700L785 551.700L778 552L777 560C772 570 765 577 755 577.500L695.700 501Z"/>
            <path class="cyl" d="M695.700 501L744.300 474C746 495 758 522 778.300 540C780 560 768 577 755 577.500C738 576 725 563 716.700 553C705 538 697 520 695.700 501Z"/>
            <path class="blue" d="M695.700 405.700L715 394L743.300 431.700V474L695.700 501Z"/>
            <path class="top" d="M654.700 382.300L675 370.700L715 394L695.700 405.700Z"/>
            <!-- right column -->
            <path class="grey" d="M778.300 453.300L819.300 477.300V954L812.700 950V497.300L785 481.700V551.700L778.300 556Z"/>
            <path class="blue" d="M785 481.700L812.700 497.300V536.700L785 551.700Z"/>
            <path class="top" d="M778.300 453.300L798.300 442.300L840.700 466L819.300 477.300Z"/>
            <!-- right plate -->
            <path class="blue" d="M819.300 477.300L840.700 466L860.700 494.500V932.800L819.300 954Z"/>
            <path class="grey" d="M860.700 494.500L957.700 551V883.300L860.700 932.800Z"/>
            <path class="line" d="M950.700 547V857"/>
            <path class="blue" d="M881.700 612Q881.700 607 888 607V838L881.700 842Z"/>
            <path class="win" d="M888.300 687V612Q888.300 607 891 607Q902.300 609 902.300 625V684.700Z"/>
            <path class="slot" d="M888.300 687L902.300 684.700V830L888.300 838Z"/>
            <!-- right foot -->
            <path class="wall" d="M909.300 832.300V855.700L852.700 887.300Z"/>
            <path class="floor" d="M852.700 887.300L909.300 855.700L927.300 865L887.300 906.700Z"/>
            <path class="wall" d="M950 856L957.700 860V883.300L885 923.300L884 916Z"/>
            <path class="rim" d="M836.700 893.300L903.300 827.700L909.300 832.300L852.700 887.300L887.300 906.700L943.300 851.700L950 856L884 918Z"/>
            <path class="lip" d="M836.700 893.300L884 918L885 923.300L837 896Z"/>
            <!-- watermark -->
            <g class="wm">
              <path d="M1015 908L1051 928.500V969L1015 989.500L979 969V928.500Z" fill="#a9dcf6"/>
              <path d="M1015 908L1051 928.500C1035 915 1000 918 985 940L979 928.500Z" fill="#cdebfb"/>
              <path d="M1051 928.500V969L1015 989.500L993 976C1015 985 1040 975 1036 945Z" fill="#8dd3f4"/>
              <path d="M1015 926L1036 938V962L1015 974L994 962V938Z" fill="#fbfdfd"/>
              <path d="M1015 930L1032 940L1015 950L998 940Z" fill="#c6e9fb"/>
              <path d="M998 940L1015 950V968L998 958Z" fill="#a6dbf6"/>
              <path d="M1032 940L1015 950V968L1032 958Z" fill="#80c9ef"/>
              <text class="wm1" x="1058" y="955">3D世界网</text>
              <text class="wm2" x="1060" y="976">WWW.3DSJW.COM</text>
            </g>
          </svg>
        </div>
      </div>
    </div>
  </div>
</div>
</body>
</html>
```

FILE: styles.css
```css
*{box-sizing:border-box}
html,body{margin:0;padding:0}
body{width:1262px;height:1003px;overflow:hidden;background:#fff;font-family:"Noto Sans CJK SC","Noto Sans",sans-serif;color:#777}
.defs{position:absolute;width:0;height:0}
svg{display:block;flex:none}
i{display:block;font-style:normal}
.app{display:flex;flex-direction:column;height:1003px}

/* head */
.head{display:flex;height:76px;border-bottom:2px solid #d6d6d6}
.logo-cell{width:66px;padding:5px 0 0 6px;flex:none}
.logo{width:57px;height:57px;border:2px solid #5f7d9f;border-radius:7px;background:#fff;display:flex;align-items:center;justify-content:center;border-top-color:#8da0b5;border-left-color:#8da0b5}
.head-main{flex:1;display:flex;flex-direction:column;min-width:0}
.qat{display:flex;height:41px;align-items:center;padding-bottom:2px}
.q{width:20px;height:22px;display:flex;align-items:center;justify-content:center;flex:none}
.custom{margin-top:-5px}
.dr{fill:#555}
.dr.pale{fill:#b9b9b9}
.qsep{width:1px;height:39px;background:#e4e4e4;flex:none;margin-top:-3px}
.ml1{margin-left:1px}.ml2{margin-left:2px}.ml9{margin-left:9px}.ml10{margin-left:10px}.ml11{margin-left:11px}
.ml12{margin-left:12px}.ml13{margin-left:13px}.ml15{margin-left:15px}.ml25{margin-left:25px}.ml47{margin-left:47px}
.ml5{margin-left:5px}.ml7{margin-left:7px}.ml19{margin-left:19px}.ml30{margin-left:30px}
.title{margin-left:auto;padding-right:29px;font:18.500px/24px "Open Sans","Noto Sans CJK SC",sans-serif;letter-spacing:-.22px;color:#555;white-space:nowrap}
.tabs{display:flex;height:33px;padding-left:45.500px;align-items:flex-end}
.rtab{height:33px;padding:0 22.500px;font-size:17.500px;line-height:34px;color:#858585;white-space:pre}
.rtab.active{padding:0 21px;border:2px solid #d6d6d6;border-bottom:0;background:#fff;height:35px;margin-bottom:-2px;position:relative;line-height:29px}
.rtab.active .lat{color:#5a6f88;margin-left:0}
.lat{font-family:"Liberation Mono",monospace;font-size:14.500px;color:#6e6e6e;margin-left:5px}
.lat3d{margin-left:0;margin-right:3px}

/* ribbon */
.ribbon{display:flex;height:140px;padding-top:6px;border-bottom:2px solid #d9d9d9;flex:none;overflow:hidden}
.grp{flex:none;display:flex;flex-direction:column}
.g-select{width:119px}.g-tools{width:216px}.g-dim{width:409px}.g-note{width:120px}.g-attr{width:118px}.g-model{width:243px}.g-last{flex:1;min-width:0;overflow:hidden}
.gsep{width:2px;height:119px;margin-top:3px;background:#dedede;flex:none}
.gbody{display:flex;height:105px;flex:none}
.glabel{height:20px;line-height:10px;text-align:center;font-size:19.500px;color:#7d7d7d;position:relative}
.lab-select{padding-left:7px}
.bigsel{position:relative;width:65px;height:105px;margin-left:12px;background:#b9cfec;display:flex;flex-direction:column;align-items:center;padding:5px 6px 0 0;flex:none}
.selcaret{position:absolute;left:24px;top:98px;fill:#667}
.big{display:flex;flex-direction:column;align-items:center;padding-top:5px;flex:none}
.bigicon{height:44px;flex:none}
.bigtxt{margin-top:16px;line-height:24px;font-size:17.500px;color:#858585;white-space:nowrap}
.bigsel .bigtxt{margin:17px -6px 0 0;font-size:18px;color:#666}
.w70{width:70px}.w89{width:89px}.w35{width:35px}
.big.w35 .wide{margin:0 -10px}
.lasticon{margin-top:20px;height:18px;margin-bottom:6px}
.g-last .big{align-items:flex-start}
.g-last .lasticon{margin-left:6px}
.colsmall{width:36px;padding-top:6px;display:flex;flex-direction:column;align-items:center;gap:22px;flex:none}
.smalllist,.attrlist{display:flex;flex-direction:column;flex:none}
.smalllist{margin-top:-3px}
.sl{display:flex;align-items:center;gap:3px;height:27px;font-size:18px;color:#858585;white-space:pre}
.icogrid{display:grid;grid-template-columns:34px 18px 35px 34px;grid-template-rows:35px 35px 35px;flex:none;margin-top:-1px}
.icogrid span,.icogrid3 span,.icocol span{display:flex;align-items:center;justify-content:center}
.icogrid .sel{background:#b9cfec}
.icogrid .shl{padding-right:8px}
.innersep{width:2px;height:104px;background:#e6e6e6;margin-left:4px;flex:none;margin-top:-1px}
.icocol{width:24px;margin-left:8px;display:grid;grid-template-rows:35px 35px 35px;flex:none;margin-top:-1px}
.radios{margin-left:12px;display:flex;flex-direction:column;flex:none;margin-top:-2px}
.radio{display:flex;align-items:center;gap:10px;height:35px;font-size:17.500px;color:#858585;white-space:pre}
.rd{width:20px;height:20px;border:1px solid #b5b5b5;border-radius:50%;background:#fff;display:flex;align-items:center;justify-content:center}
.rd.on::before{content:"";width:8px;height:8px;border-radius:50%;background:#8e8e8e}
.icogrid3{display:grid;grid-template-columns:35px 35px 35px;grid-template-rows:35px 35px 35px;flex:none;margin-top:-1px}
.attrlist{margin-left:13px;margin-top:-1px}
.attrlist .sl{height:26px;gap:3px;font-size:17.800px}
.g-model .big .bigtxt{font-size:17.800px}

/* svg icon text */
.ta{font:bold 9px "Liberation Sans",sans-serif;fill:#123c70}
.tb{font:italic bold 12px "Liberation Serif",serif;fill:#123c70}
.tc{font:bold 16px "Liberation Serif",serif;fill:#1e4f8a}
.td{font:bold 13px "Liberation Serif",serif;fill:#1e4f8a}
.tr{font:bold 15px "Liberation Sans",sans-serif;fill:#d0202a}
.tk{font:bold 8px "Liberation Sans",sans-serif;fill:#222}
.tn{font:bold 8px "Liberation Sans",sans-serif;fill:#111}
.tm{font:bold 6.500px "Liberation Sans",sans-serif;fill:#c0202a}

/* main */
.main{flex:1;display:flex;min-height:0}
.strip{width:44px;background:#f3f4f4;flex:none;padding-top:6px;display:flex;flex-direction:column}
.vtab{height:108px;border-left:2px solid #2a5699;display:flex;flex-direction:column;align-items:center;padding:6px 6px 0 0}
.vtxt{writing-mode:vertical-rl;font-size:18px;color:#8ba0b5;margin-top:2px;line-height:18px}
.sitem{height:51px;display:flex;align-items:center;justify-content:center;position:relative;padding-right:3px}
.sitem::before{content:"";position:absolute;left:0;top:4px;bottom:4px;width:2px;background:#e2e2e2}
.vtab + .sitem{margin-top:7px}
.work{flex:1;min-width:0;display:flex;flex-direction:column}
.doctabs{height:39px;padding:2px 0 0 2px;border-bottom:1px solid #2a5699;background:#fff;flex:none}
.doctab{width:330px;height:36px;background:#2a5699;display:flex;align-items:center;padding-left:21px;color:#fff}
.doctxt{margin-left:5px;font:19px/24px "Open Sans","Noto Sans CJK SC",sans-serif;letter-spacing:-.5px;white-space:nowrap;width:263px;color:#f3f6fb}
.docx{flex:none}
.stage{flex:1;display:flex;background:#fbfdfd;min-height:0}
.pane{width:375px;flex:none;padding-top:60px}
.splitter{height:14px;border:2px solid #8c8c8c;border-top-color:#a0a0a0;background:linear-gradient(#f2f2f2,#c9c9c9);display:flex;align-items:center;justify-content:center}
.splitter i{width:38px;border-top:1px dotted #3f63a0}
.tree{padding:5px 0 0 23px;font:19px/20px "Open Sans","Noto Sans CJK SC",sans-serif;color:#333}
.row{height:24px;display:grid;grid-template-columns:24px 11px 16px 8px 27px 27px 1fr;align-items:center}
.node{height:22px;justify-self:start;display:flex;align-items:center;border:1px solid #bfcad3;background:linear-gradient(#fff,#e4e9ed);padding-right:8px;white-space:nowrap}
.node span{display:block;height:20px;line-height:20px}
.ti{width:23px;flex:none;margin:0 3px 0 3px}
.root{width:298px;margin-left:-15px}
.root span{letter-spacing:-.72px}
.dim{color:#8c8c8c}
.tight span{letter-spacing:-1.100px}
.b{font-weight:700;color:#111}
.c1{grid-column:1;grid-row:1;margin-top:-2px}
.c2{grid-column:2 / span 2;grid-row:1;margin-top:-2px}
.c3{grid-column:3;grid-row:1;margin-top:-2px}
.c4{grid-column:4 / -1;grid-row:1;margin-top:0}
.c5{grid-column:5;grid-row:1;margin-top:-2px}
.c6{grid-column:6 / -1;grid-row:1}
.c7{grid-column:7;grid-row:1}
.exp{width:13px;height:13px;border:1px solid #7a7a7a;background:linear-gradient(#fff,#ddd);position:relative}
.exp::before{content:"";position:absolute;left:2px;right:2px;top:5px;height:1px;background:#222}
.exp::after{content:"";position:absolute;top:2px;bottom:2px;left:5px;width:1px;background:#222}
.exp.minus::after{display:none}
.chk{width:19px;height:17px;border:2px solid #5a6b82;background:#fff;position:relative}
.chk.on::after{content:"";position:absolute;left:5px;top:-1px;width:6px;height:10px;border:solid #14316e;border-width:0 3px 3px 0;transform:rotate(40deg)}
.band{grid-column:2 / -1;grid-row:1;width:275px;height:22px;display:flex;align-items:center;padding-left:9px;gap:2px;position:relative;font-size:20px}
.band.gray{background:linear-gradient(#979797,#b9b9b9 45%,#8a8a8a 55%,#7e7e7e);color:#fff}
.band.orange{background:linear-gradient(#f6ac22,#fcd976 45%,#f9bf3e 70%,#f4a41c);color:#111;font-weight:700;gap:1px}
.band-arrow{position:absolute;right:16px;top:3px}

/* model */
.canvas{flex:1;min-width:0;overflow:hidden}
.model path{stroke:#3f474e;stroke-width:1;stroke-linejoin:round}
.model .grey{fill:#8d9397}
.model .blue{fill:url(#blue)}
.model .top{fill:#a5abb1}
.model .wall{fill:#8a90a2}
.model .floor{fill:#a3a9ae}
.model .rim{fill:#b1b9c0}
.model .lip{fill:#9da5ab}
.model .plate{fill:url(#plate)}
.model .under{fill:#8a90a2}
.model .cyl{fill:url(#cyl)}
.model .dark{fill:#5c6166;stroke-width:.5}
.model .win{fill:#fff}
.model .slot{fill:#9ea5a9}
.model .line{fill:none}
.model .wm path{stroke:none}
.wm1{font:bold 41px "Open Sans","Noto Sans CJK SC",sans-serif;fill:#f5f7f7}
.wm2{font:bold 14px "Open Sans",sans-serif;fill:#f4f6f6;letter-spacing:2.900px}
```
